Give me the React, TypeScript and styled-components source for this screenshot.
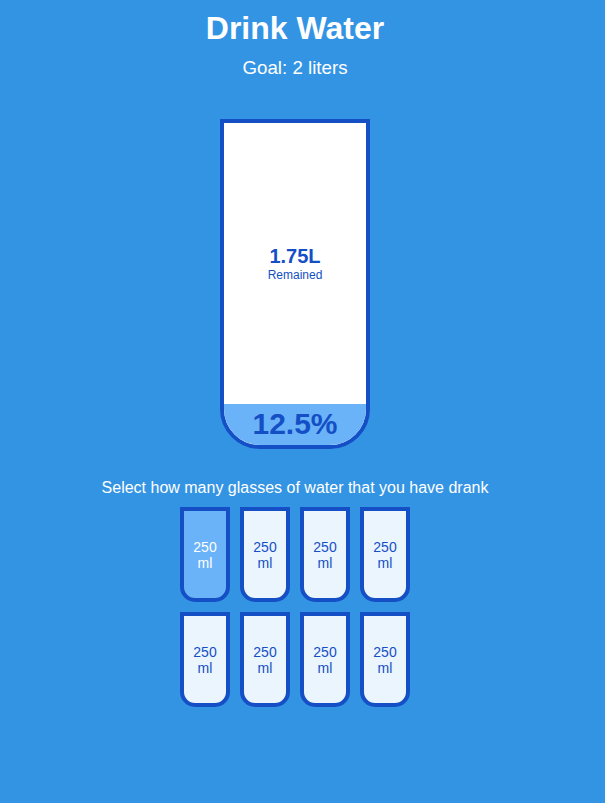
import React, {useState} from 'react';
import styled, {createGlobalStyle} from 'styled-components';

const BG = '#3494e4';
const DARK = '#144fc6';
const FILL = '#6ab3f8';
const CUP_HEIGHT = 330;
const TOTAL_CUPS = 8;

const GlobalStyle = createGlobalStyle`
    * {
        box-sizing: border-box;
    }

    html, body {
        margin: 0;
        background-color: ${BG};
        min-height: 100%;
    }

    body {
        color: #fff;
        font-family: "Liberation Sans", Arial, sans-serif;
    }
`

export default function App() {
    const [full, setFull] = useState(1);

    const onCupClick = (idx: number) => {
        if (idx + 1 === full) {
            setFull(idx);
        } else {
            setFull(idx + 1);
        }
    };

    const percent = (full / TOTAL_CUPS) * 100;
    const remained = 2 - (250 * full) / 1000;

    return (
        <>
            <GlobalStyle/>
            <Page>
                <Title>Drink Water</Title>
                <Goal>Goal: 2 liters</Goal>

                <BigCup>
                    <Remained $hidden={full === TOTAL_CUPS}>
                        <Liters>{remained}L</Liters>
                        <small>Remained</small>
                    </Remained>
                    <Percentage style={{height: (full / TOTAL_CUPS) * CUP_HEIGHT}} $hidden={full === 0}>
                        {percent}%
                    </Percentage>
                </BigCup>

                <Text>Select how many glasses of water that you have drank</Text>

                <Cups>
                    {Array.from({length: TOTAL_CUPS}).map((_, i) => (
                        <SmallCup key={i} $full={i < full} onClick={() => onCupClick(i)}>
                            250 ml
                        </SmallCup>
                    ))}
                </Cups>
            </Page>
        </>
    );
}

const Page = styled.div`
    display: flex;
    flex-direction: column;
    align-items: center;
    width: 590px;
    padding-bottom: 40px;
`

const Title = styled.h1`
    margin: 10px 0 0;
    font-size: 32px;
    font-weight: bold;
`

const Goal = styled.h3`
    margin: 10px 0;
    font-size: 18.72px;
    font-weight: 400;
`

const BigCup = styled.div`
    display: flex;
    flex-direction: column;
    width: 150px;
    height: ${CUP_HEIGHT}px;
    margin: 30px 0;
    background-color: #fff;
    border: 4px solid ${DARK};
    border-radius: 0 0 40px 40px;
    color: ${DARK};
    overflow: hidden;
`

const Remained = styled.div<{$hidden: boolean}>`
    display: ${p => p.$hidden ? 'none' : 'flex'};
    flex: 1;
    flex-direction: column;
    align-items: center;
    justify-content: center;
    text-align: center;

    small {
        font-size: 12px;
    }
`

const Liters = styled.span`
    font-size: 20px;
    font-weight: bold;
`

const Percentage = styled.div<{$hidden: boolean}>`
    display: ${p => p.$hidden ? 'none' : 'flex'};
    align-items: center;
    justify-content: center;
    background-color: ${FILL};
    font-size: 30px;
    font-weight: bold;
`

const Text = styled.p`
    margin: 0 0 5px;
    font-size: 16px;
    text-align: center;
`

const Cups = styled.div`
    display: flex;
    flex-wrap: wrap;
    align-items: center;
    justify-content: center;
    width: 280px;
`

const SmallCup = styled.div<{$full: boolean}>`
    display: flex;
    align-items: center;
    justify-content: center;
    width: 50px;
    height: 95px;
    margin: 5px;
    background-color: ${p => p.$full ? FILL : 'rgba(255, 255, 255, 0.9)'};
    border: 4px solid ${DARK};
    border-radius: 0 0 15px 15px;
    color: ${p => p.$full ? '#fff' : DARK};
    font-size: 14px;
    text-align: center;
    cursor: pointer;
`
